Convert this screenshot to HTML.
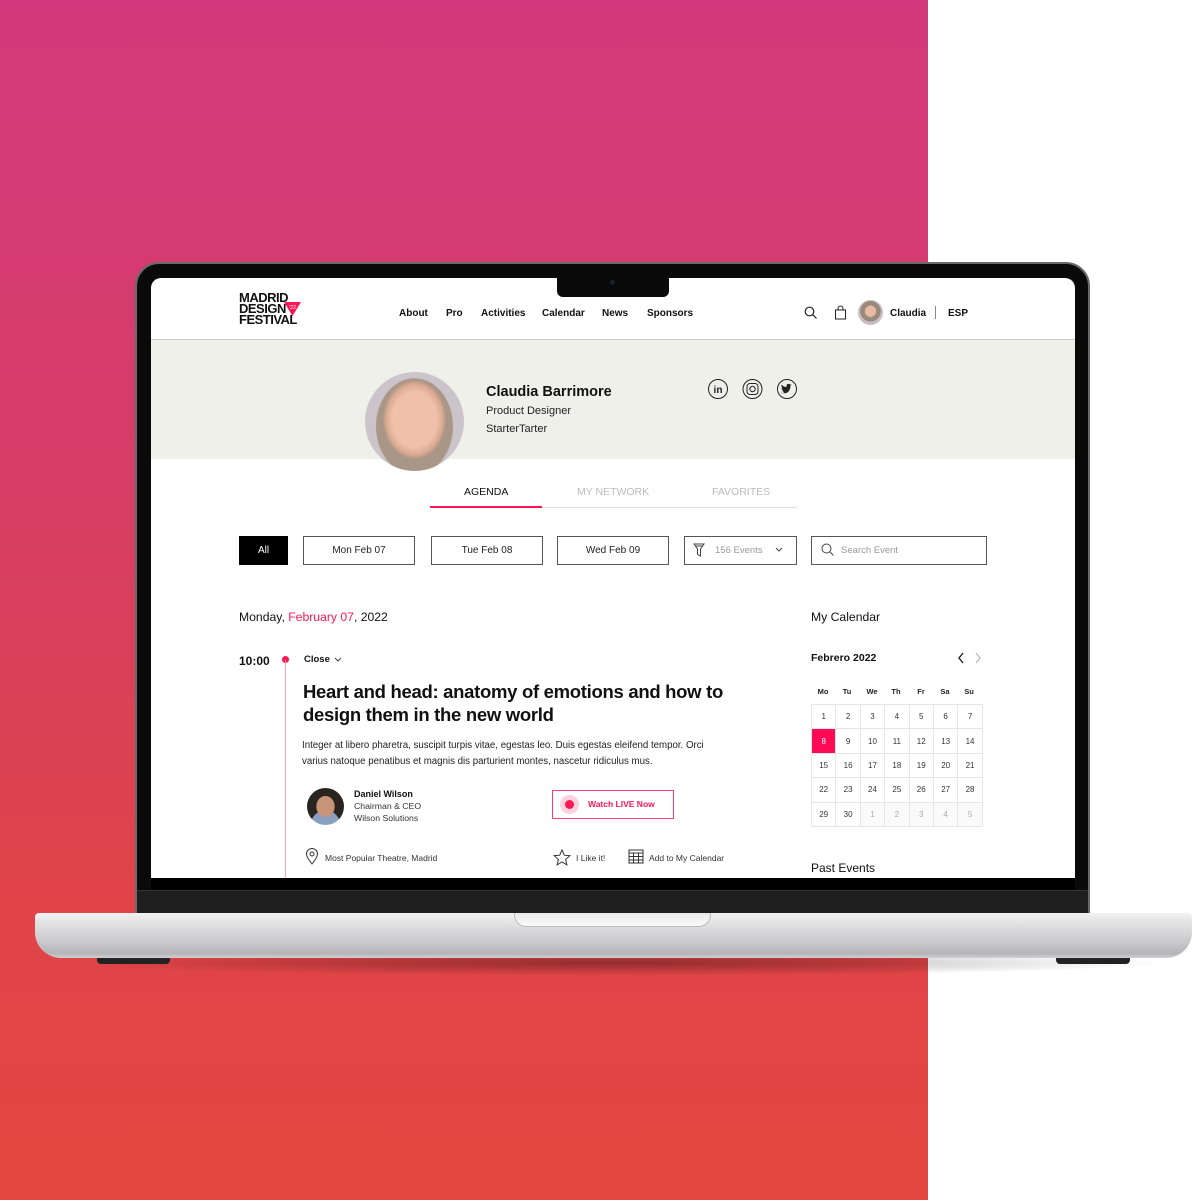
<!DOCTYPE html>
<html><head><meta charset="utf-8"><style>
*{margin:0;padding:0;box-sizing:border-box}
body{width:1202px;height:1200px;position:relative;overflow:hidden;background:#fff;font-family:"Liberation Sans",Arial,sans-serif;color:#111}
.a{position:absolute}
.bg{left:0;top:0;width:928px;height:1200px;background:linear-gradient(180deg,#d2397c 0%,#d73d66 40%,#e04449 75%,#e2463f 100%)}
.t{position:absolute;white-space:nowrap}
.btn{position:absolute;top:536px;height:29px;border:1px solid #555;font-size:10px;display:flex;align-items:center;justify-content:center;color:#222;background:#fff}
.cal{position:absolute;left:811px;top:704px;border-collapse:collapse}
.cal td{width:24.4px;height:24.4px;border:1px solid #e6e6e6;font-size:8px;text-align:center;color:#333}
.cal td.g{color:#aaa;background:#fafafa}
.cal td.s{background:#ff0a54;color:#fff}
.dh{position:absolute;top:687px;font-size:7.5px;font-weight:bold;width:24px;text-align:center;color:#222}
.nav{position:absolute;top:308px;font-size:10px;font-weight:bold;white-space:nowrap}
</style></head><body>
<div class="a bg"></div>
<div class="a" style="left:60px;top:950px;width:1110px;height:26px;background:radial-gradient(ellipse at center,rgba(0,0,0,.35),rgba(0,0,0,0) 70%)"></div>
<div class="a" style="left:135px;top:262px;width:955px;height:655px;background:#0a0a0a;border-radius:24px 24px 0 0;border:2px solid #6a6a6a"></div>
<div class="a" style="left:137px;top:890px;width:951px;height:26px;background:#1e1e1e;border-top:1px solid #333"></div>
<div class="a" style="left:35px;top:913px;width:1157px;height:45px;background:linear-gradient(180deg,#f2f2f2 0%,#dedee0 30%,#c9c9cc 65%,#b5b5b9 90%,#d0d0d2 100%);border-radius:4px 4px 26px 26px"></div>
<div class="a" style="left:514px;top:913px;width:197px;height:14px;background:linear-gradient(#e8e8e8,#fafafa);border-radius:0 0 12px 12px;border:1px solid #bbb;border-top:none"></div>
<div class="a" style="left:97px;top:958px;width:73px;height:6px;background:#222;border-radius:0 0 4px 4px"></div>
<div class="a" style="left:1056px;top:958px;width:74px;height:6px;background:#222;border-radius:0 0 4px 4px"></div>
<div class="a" style="left:151px;top:278px;width:924px;height:600px;background:#fff;border-radius:10px 10px 0 0;overflow:hidden"></div>
<div class="a" style="left:557px;top:276px;width:112px;height:21px;background:#0a0a0a;border-radius:0 0 6px 6px"></div>
<div class="a" style="left:610px;top:280px;width:5px;height:5px;border-radius:50%;background:#1a2030"></div>
<div class="t" style="left:239px;top:292px;font-size:13px;line-height:11px;font-weight:900;letter-spacing:-.5px">MADRID<br>DESIGN<br>FESTIVAL</div>
<svg class="a" style="left:284px;top:301px" width="18" height="16"><polygon points="0,1 17,1 8.5,15" fill="#ff1654"/><text x="8.5" y="8" font-size="5.5" fill="#fff" text-anchor="middle" font-family="Liberation Sans">'22</text></svg>
<div class="nav" style="left:399px">About</div>
<div class="nav" style="left:446px">Pro</div>
<div class="nav" style="left:481px">Activities</div>
<div class="nav" style="left:542px">Calendar</div>
<div class="nav" style="left:602px">News</div>
<div class="nav" style="left:647px">Sponsors</div>
<svg class="a" style="left:804px;top:306px" width="14" height="14" fill="none" stroke="#222" stroke-width="1.2"><circle cx="5.5" cy="5.5" r="4.3"/><path d="M8.7 8.7L12.5 12.5"/></svg>
<svg class="a" style="left:834px;top:305px" width="13" height="15" fill="none" stroke="#222" stroke-width="1"><path d="M1.5 5h10v9h-10z M4 5V3.5a2.5 2.5 0 0 1 5 0V5"/></svg>
<div class="a" style="left:858px;top:300px;width:25px;height:25px;border-radius:50%;background:radial-gradient(circle at 50% 45%,#e9b9a3 0 30%,#9a8a7c 31% 55%,#c8bec3 56%)"></div>
<div class="nav" style="left:890px">Claudia</div>
<div class="a" style="left:935px;top:306px;width:1px;height:13px;background:#888"></div>
<div class="nav" style="left:948px">ESP</div>
<div class="a" style="left:151px;top:339px;width:924px;height:1px;background:#ccc"></div>
<div class="a" style="left:151px;top:340px;width:924px;height:119px;background:#f0f0eb"></div>
<div class="a" style="left:365px;top:372px;width:99px;height:99px;border-radius:50%;background:radial-gradient(ellipse 32% 40% at 50% 48%,#f0c0a8 0 70%,#d8a890 90%,transparent 100%),radial-gradient(ellipse 48% 60% at 50% 55%,#a99686 0 80%,transparent 82%),#cbc4cb"></div>
<div class="t" style="left:486px;top:384px;font-size:14.5px;font-weight:bold">Claudia Barrimore</div>
<div class="t" style="left:486px;top:405px;font-size:11px;color:#222">Product Designer</div>
<div class="t" style="left:486px;top:423px;font-size:11px;color:#222">StarterTarter</div>
<svg class="a" style="left:707px;top:378px" width="92" height="22" fill="none" stroke="#222" stroke-width="1"><circle cx="11" cy="11" r="9.5"/><text x="11" y="15" font-size="10" font-weight="bold" fill="#222" stroke="none" text-anchor="middle" font-family="Liberation Sans">in</text><circle cx="45.5" cy="11" r="9.5"/><rect x="40" y="5.5" width="11" height="11" rx="3"/><circle cx="45.5" cy="11" r="2.7"/><circle cx="80" cy="11" r="9.5"/><path d="M74 14.5c3 1.5 7 1 8.5-2.5 1-2 1-3.5 1-4.5l1.3-1.3-1.6.4c-.8-1-2.600-1-3.4.2-.5.8-.4 1.6-.3 2.2-2 0-3.6-1-4.8-2.4-.7 1.4 0 2.8 1 3.4-.5 0-1-.1-1.3-.4 0 1.4 1 2.3 2 2.6-.5.2-1 .2-1.4.1.4 1.1 1.4 1.7 2.4 1.8-1 .8-2.2 1.1-3.4 1" fill="#222" stroke="none"/></svg>
<div class="t" style="left:464px;top:486px;font-size:10.5px">AGENDA</div>
<div class="t" style="left:577px;top:486px;font-size:10.5px;color:#bbb">MY NETWORK</div>
<div class="t" style="left:712px;top:486px;font-size:10.5px;color:#bbb">FAVORITES</div>
<div class="a" style="left:430px;top:507px;width:367px;height:1px;background:#ddd"></div>
<div class="a" style="left:430px;top:506px;width:112px;height:2px;background:#ff1654"></div>
<div class="btn" style="left:239px;width:49px;background:#000;color:#fff;border-color:#000">All</div>
<div class="btn" style="left:303px;width:112px">Mon Feb 07</div>
<div class="btn" style="left:431px;width:112px">Tue Feb 08</div>
<div class="btn" style="left:557px;width:112px">Wed Feb 09</div>
<div class="btn" style="left:684px;width:113px;justify-content:flex-start;padding-left:30px;color:#999;font-size:9.5px">156 Events</div>
<svg class="a" style="left:693px;top:543px" width="12" height="15" fill="none" stroke="#444" stroke-width="1"><path d="M1 1h10l-3.5 5v7l-3-1.5V6z M2 3h8"/></svg>
<svg class="a" style="left:775px;top:547px" width="8" height="6" fill="none" stroke="#444" stroke-width="1"><path d="M1 1l3 3 3-3"/></svg>
<div class="btn" style="left:811px;width:176px;justify-content:flex-start;padding-left:29px;color:#999;font-size:9.5px">Search Event</div>
<svg class="a" style="left:821px;top:543px" width="14" height="14" fill="none" stroke="#444" stroke-width="1"><circle cx="5.5" cy="5.5" r="4.5"/><path d="M9 9l3.5 3.5"/></svg>
<div class="t" style="left:239px;top:610px;font-size:12.2px">Monday, <span style="color:#ff1654">February 07</span>, 2022</div>
<div class="t" style="left:811px;top:610px;font-size:12.2px">My Calendar</div>
<div class="t" style="left:239px;top:654px;font-size:12px;font-weight:bold">10:00</div>
<div class="a" style="left:282px;top:656px;width:7px;height:7px;border-radius:50%;background:#ff1654"></div>
<div class="a" style="left:285px;top:660px;width:1px;height:218px;background:#f7a0b8"></div>
<div class="t" style="left:304px;top:654px;font-size:9.5px;font-weight:bold">Close</div>
<svg class="a" style="left:334px;top:657px" width="8" height="6" fill="none" stroke="#444" stroke-width="1"><path d="M1 1l3 3 3-3"/></svg>
<div class="t" style="left:303px;top:680px;font-size:18.5px;font-weight:bold;line-height:23px;letter-spacing:-.3px">Heart and head: anatomy of emotions and how to<br>design them in the new world</div>
<div class="t" style="left:302px;top:738px;font-size:9.7px;line-height:16px;color:#222">Integer at libero pharetra, suscipit turpis vitae, egestas leo. Duis egestas eleifend tempor. Orci<br>varius natoque penatibus et magnis dis parturient montes, nascetur ridiculus mus.</div>
<div class="a" style="left:307px;top:788px;width:37px;height:37px;border-radius:50%;background:radial-gradient(ellipse 35% 40% at 50% 50%,#c89478 0 70%,transparent 72%),radial-gradient(circle at 50% 100%,#8aa0c0 0 35%,transparent 36%),#2a2420"></div>
<div class="t" style="left:354px;top:789px;font-size:9px;font-weight:bold">Daniel Wilson</div>
<div class="t" style="left:354px;top:801px;font-size:8.7px;color:#333">Chairman &amp; CEO</div>
<div class="t" style="left:354px;top:813px;font-size:8.7px;color:#333">Wilson Solutions</div>
<div class="a" style="left:552px;top:790px;width:122px;height:29px;border:1.5px solid #ff3d78"></div>
<div class="a" style="left:560px;top:795px;width:19px;height:19px;border-radius:50%;background:#ffd0de"></div>
<div class="a" style="left:565px;top:800px;width:9px;height:9px;border-radius:50%;background:#ff1654"></div>
<div class="t" style="left:588px;top:799px;font-size:8.5px;font-weight:bold;color:#ff1654">Watch LIVE Now</div>
<svg class="a" style="left:305px;top:848px" width="14" height="18" fill="none" stroke="#333" stroke-width="1"><path d="M7 16C3 11 1.5 8.5 1.5 6a5.5 5.5 0 0 1 11 0c0 2.5-1.5 5-5.5 10z"/><circle cx="7" cy="6" r="2"/></svg>
<div class="t" style="left:325px;top:853px;font-size:8.5px;color:#333">Most Popular Theatre, Madrid</div>
<svg class="a" style="left:553px;top:849px" width="18" height="17" fill="none" stroke="#333" stroke-width="1"><path d="M9 1l2.3 5.2 5.6.5-4.3 3.7 1.3 5.5L9 13 4.1 15.9l1.3-5.5L1.1 6.7l5.6-.5z"/></svg>
<div class="t" style="left:576px;top:853px;font-size:8.5px;color:#333">I Like it!</div>
<svg class="a" style="left:628px;top:849px" width="16" height="15" fill="none" stroke="#333" stroke-width="1"><rect x="1" y="1" width="14" height="13"/><path d="M1 4h14M1 7.5h14M1 11h14M5.5 4v10M10.5 4v10"/></svg>
<div class="t" style="left:649px;top:853px;font-size:8.5px;color:#333">Add to My Calendar</div>
<div class="t" style="left:811px;top:652px;font-size:10.5px;font-weight:bold">Febrero 2022</div>
<svg class="a" style="left:957px;top:652px" width="26" height="12" fill="none" stroke-width="1.4"><path d="M6 1L2 6l4 5" stroke="#222"/><path d="M19 1l4 5-4 5" stroke="#bbb"/></svg>
<div class="dh" style="left:811px">Mo</div><div class="dh" style="left:835px">Tu</div><div class="dh" style="left:860px">We</div><div class="dh" style="left:884px">Th</div><div class="dh" style="left:909px">Fr</div><div class="dh" style="left:933px">Sa</div><div class="dh" style="left:957px">Su</div>
<table class="cal">
<tr><td>1</td><td>2</td><td>3</td><td>4</td><td>5</td><td>6</td><td>7</td></tr>
<tr><td class="s">8</td><td>9</td><td>10</td><td>11</td><td>12</td><td>13</td><td>14</td></tr>
<tr><td>15</td><td>16</td><td>17</td><td>18</td><td>19</td><td>20</td><td>21</td></tr>
<tr><td>22</td><td>23</td><td>24</td><td>25</td><td>26</td><td>27</td><td>28</td></tr>
<tr><td>29</td><td>30</td><td class="g">1</td><td class="g">2</td><td class="g">3</td><td class="g">4</td><td class="g">5</td></tr>
</table>
<div class="t" style="left:811px;top:861px;font-size:12px">Past Events</div>
<div class="a" style="left:151px;top:878px;width:924px;height:12px;background:#000"></div>
</body></html>
